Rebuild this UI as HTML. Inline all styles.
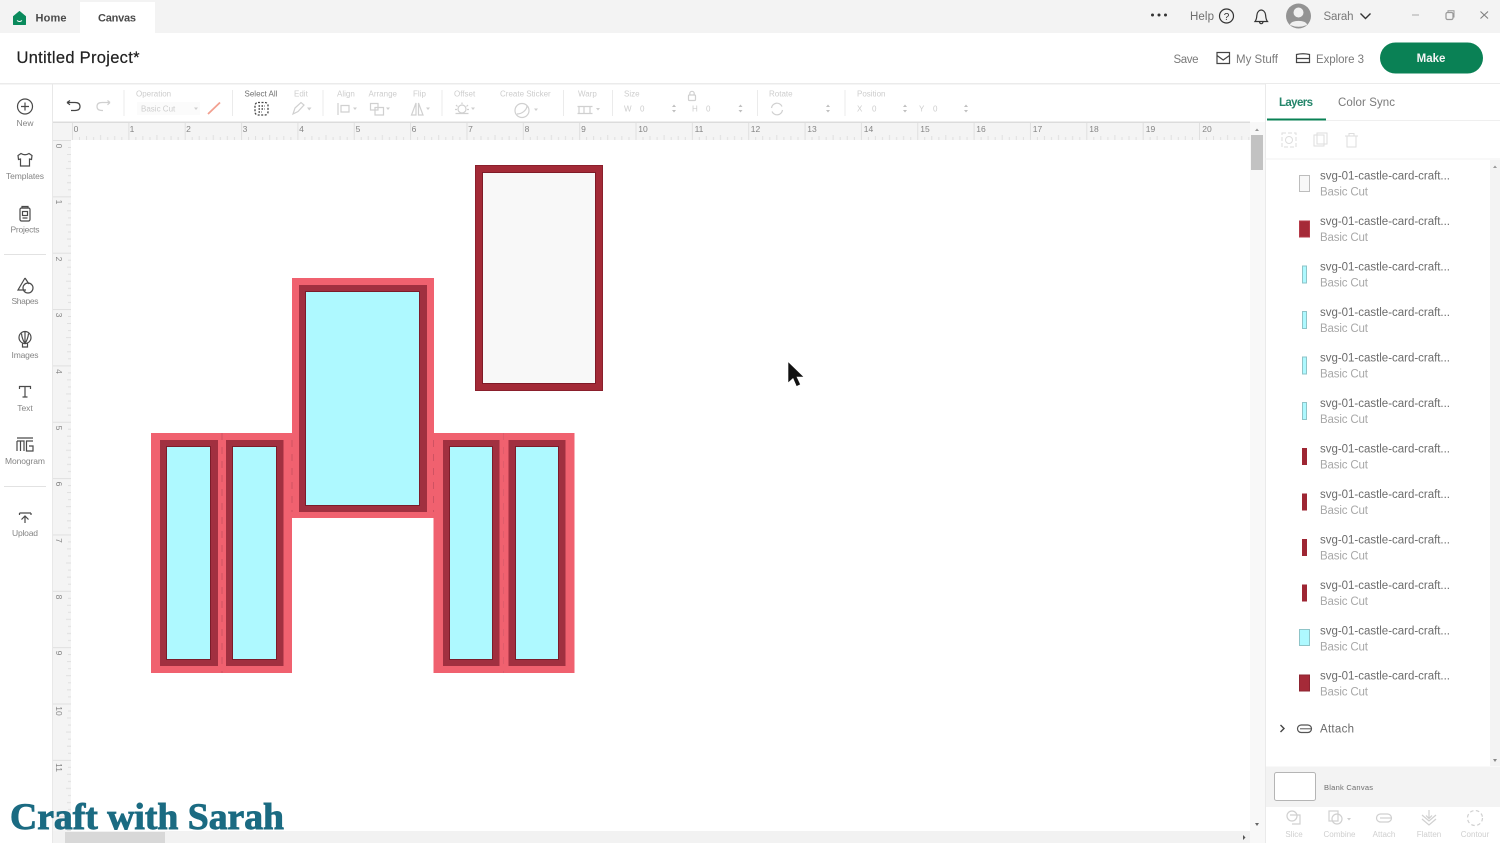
<!DOCTYPE html>
<html lang="en"><head><meta charset="utf-8"><title>Untitled Project</title>
<style>
html,body{margin:0;padding:0;background:#fff;width:1500px;height:843px;overflow:hidden}
svg{display:block;filter:blur(.35px)}
text{font-family:"Liberation Sans",sans-serif}
.n{font-size:8.5px;fill:#858585;text-anchor:middle}
.t{font-size:8px;fill:#cdcdcd}
.k{font-size:8px;fill:#cfcfcf;text-anchor:middle}
.r{font-size:8.5px;fill:#858585}
.l{font-size:11.5px;fill:#6c6c6c}
.b{font-size:11.5px;fill:#a8a8a8}
.i{fill:none;stroke:#4a4a4a;stroke-width:1.2}
.g{fill:none;stroke:#d0d0d0;stroke-width:1.2}
</style></head><body>
<svg width="1500" height="843" viewBox="0 0 1500 843" xmlns="http://www.w3.org/2000/svg">
<defs>
<pattern id="hr" x="72" y="122" width="56.35" height="18" patternUnits="userSpaceOnUse">
<rect width="56.35" height="18" fill="#f4f4f4"/>
<path d="M.5 0V18M7.5 15V18M14.5 14V18M21.6 15V18M28.6 13V18M35.7 15V18M42.7 14V18M49.8 15V18" stroke="#e0e0e0" stroke-width="1" fill="none"/>
</pattern>
<pattern id="vr" x="53" y="140" width="18" height="56.35" patternUnits="userSpaceOnUse">
<rect width="18" height="56.35" fill="#f4f4f4"/>
<path d="M0 .5H18M15 7.5H18M14 14.5H18M15 21.6H18M13 28.6H18M15 35.7H18M14 42.7H18M15 49.8H18" stroke="#e0e0e0" stroke-width="1" fill="none"/>
</pattern>
</defs>

<rect width="1500" height="843" fill="#fff"/>

<!-- top bar -->
<rect width="1500" height="33" fill="#f3f3f3"/>
<rect x="80" y="2" width="75" height="31" fill="#fff"/>
<path d="M13.500 16.500L19.500 11.500L25.500 16.500V24.500H13.500Z" fill="#0a8a5c" stroke="#0a8a5c" stroke-linejoin="round"/>
<path d="M17 20.500Q19.500 22.500 22 20.500" stroke="#fff" stroke-width="1" fill="none"/>
<text x="35.500" y="21.500" font-size="11" font-weight="700" fill="#4a4a4a" textLength="31">Home</text>
<text x="98" y="21.500" font-size="11" font-weight="700" fill="#4a4a4a" textLength="38">Canvas</text>
<circle cx="1152.500" cy="15" r="1.500" fill="#333"/><circle cx="1159" cy="15" r="1.500" fill="#333"/><circle cx="1165.500" cy="15" r="1.500" fill="#333"/>
<text x="1190" y="20" font-size="11.500" fill="#6e6e6e" textLength="24">Help</text>
<circle cx="1226.500" cy="16" r="7" fill="none" stroke="#333" stroke-width="1.200"/>
<text x="1226.500" y="20" font-size="10" fill="#333" text-anchor="middle">?</text>
<path d="M1255 21.500H1267.500C1265.500 19 1266 17 1265.500 14.500C1265 11.500 1263 10 1261.200 10C1259.500 10 1257.500 11.500 1257 14.500C1256.500 17 1257 19 1255 21.500ZM1259.500 21.800C1259.800 24.300 1262.700 24.300 1263 21.800" fill="none" stroke="#333" stroke-width="1.200"/>
<circle cx="1298.500" cy="16" r="12.500" fill="#939393"/>
<circle cx="1298.500" cy="12.500" r="5" fill="#f0f0f0"/>
<path d="M1290 25C1290 19.500 1307 19.500 1307 25Q1298.500 28.500 1290 25Z" fill="#f0f0f0"/>
<text x="1323.500" y="20" font-size="11.500" fill="#7a7a7a" textLength="30">Sarah</text>
<path d="M1360.500 13.500L1365.500 18.500L1370.500 13.500" fill="none" stroke="#333" stroke-width="1.400"/>
<path d="M1412 15H1419" stroke="#b5b5b5" stroke-width="1.200"/>
<rect x="1446" y="12.500" width="7" height="7" rx="1.500" fill="none" stroke="#999" stroke-width="1.200"/>
<path d="M1448 12V10.800H1454V17H1453" fill="none" stroke="#999"/>
<path d="M1480.500 11.500L1488 18.500M1488 11.500L1480.500 18.500" stroke="#808080" stroke-width="1.100"/>

<!-- title bar -->
<text x="16.500" y="63" font-size="16.500" fill="#222" stroke="#222" stroke-width=".2" textLength="123">Untitled Project*</text>
<text x="1173.500" y="63" font-size="11.500" fill="#7a7a7a" textLength="25">Save</text>
<path d="M1217 52.500H1229.500V63.500H1217ZM1217 55.500L1223.200 60L1229.500 55.500" fill="none" stroke="#444" stroke-width="1.200"/>
<text x="1236" y="63" font-size="11.500" fill="#7a7a7a" textLength="42">My Stuff</text>
<path d="M1296.500 54.500Q1303 53 1309.500 54.500V62.500H1296.500ZM1296.500 58.500H1309.500" fill="none" stroke="#444" stroke-width="1.200"/>
<text x="1316" y="63" font-size="11.500" fill="#7a7a7a" textLength="48">Explore 3</text>
<rect x="1380" y="42.500" width="103" height="31" rx="15.500" fill="#0a8155"/>
<text x="1431" y="62" font-size="11.500" font-weight="700" fill="#f4f4f4" text-anchor="middle">Make</text>
<rect y="83" width="1500" height="1.500" fill="#ebebeb"/>

<!-- toolbar -->
<g>
<path d="M67 102.500H75Q80 102.500 80 106.500T75 110.500H71M67 102.500L70 100.500M67 102.500L70 104.800" fill="none" stroke="#444" stroke-width="1.200"/>
<path d="M110 102.500H102Q97 102.500 97 106.500T102 110.500H103M110 102.500L107.500 100.500M110 102.500L107.500 104.800" fill="none" stroke="#d0d0d0" stroke-width="1.200"/>
<path d="M124 90V116M232.500 90V116M323 90V116M442 90V116M563.500 90V116M612.500 90V116M757.500 90V116M845 90V116" stroke="#ebebeb" stroke-width="1"/>
<text class="t" x="136" y="96.500">Operation</text>
<rect x="137" y="102" width="63" height="13" fill="#fbfbfb"/>
<text class="t" x="141" y="111.500">Basic Cut</text>
<path d="M194 107.500H198L196 110Z" fill="#cfcfcf"/>
<path d="M208 114L220 102.500" stroke="#f2a090" stroke-width="1.800"/>
<text x="244.500" y="96.500" font-size="8" fill="#707070">Select All</text>
<rect x="255" y="102.500" width="13" height="12.500" rx="3" fill="none" stroke="#444" stroke-width="1.300" stroke-dasharray="2 1.500"/>
<path d="M258.500 106H265M258.500 109H265M258.500 112H262" stroke="#444" stroke-width="1.500" stroke-dasharray="1.500 1.500"/>
<text class="t" x="294" y="96.500">Edit</text>
<path d="M293 114L295 108L301 102.500L304 105L298 111.500Z" class="g"/><path d="M307 107.500H311.500L309.200 110.500Z" fill="#cfcfcf"/>
<text class="t" x="337" y="96.500">Align</text>
<path d="M338 103V115M341 105.500H349V112H341Z" class="g"/><path d="M353 107.500H357L355 110Z" fill="#cfcfcf"/>
<text class="t" x="368.500" y="96.500">Arrange</text>
<path d="M370.500 103.500H378V110H370.500ZM375 107.500H383.500V115H375Z" class="g"/><path d="M386 107.500H390L388 110Z" fill="#cfcfcf"/>
<text class="t" x="413" y="96.500">Flip</text>
<path d="M416 103L411.500 115H416ZM418.500 103L423 115H418.500Z" class="g"/><path d="M426 107.500H430L428 110Z" fill="#cfcfcf"/>
<text class="t" x="454" y="96.500">Offset</text>
<circle cx="462" cy="109" r="4" class="g"/><path d="M462 102.500V104M456 105L457.500 106.500M468 105L466.500 106.500M455.500 113.500H468.500M455 109.500H457M467 109.500H469" class="g"/><path d="M471 107.500H475L473 110Z" fill="#cfcfcf"/>
<text class="t" x="500" y="96.500">Create Sticker</text>
<circle cx="522" cy="110.500" r="7" class="g"/><path d="M517 114C522 114 527 110 527 105.500" class="g"/><path d="M534 108.500H538L536 111Z" fill="#cfcfcf"/>
<text class="t" x="578" y="96.500">Warp</text>
<path d="M577.500 106.500H592.500M577.500 113.500H592.500M579 106.500V113.500M584 106.500V113.500M590 106.500V113.500" class="g"/><path d="M596 108H600L598 110.500Z" fill="#cfcfcf"/>
<text class="t" x="624" y="96.500">Size</text>
<rect x="688.500" y="95" width="7" height="5.500" class="g" rx="1"/><path d="M689.800 95V93.500A2.200 2.200 0 0 1 694.200 93.500V95" class="g"/>
<text class="t" x="624" y="111.500">W</text><text class="t" x="640" y="111.500">0</text>
<text class="t" x="692" y="111.500">H</text><text class="t" x="706" y="111.500">0</text>
<path d="M672 107L674 104.500L676 107ZM672 110L674 112.500L676 110Z" fill="#c0c0c0"/>
<path d="M738.500 107L740.500 104.500L742.500 107ZM738.500 110L740.500 112.500L742.500 110Z" fill="#c0c0c0"/>
<text class="t" x="769" y="96.500">Rotate</text>
<path d="M771.500 108A5.500 5.500 0 0 1 782 106.500M782.500 110A5.500 5.500 0 0 1 772 111.500" class="g"/>
<path d="M826 107L828 104.500L830 107ZM826 110L828 112.500L830 110Z" fill="#c0c0c0"/>
<text class="t" x="857" y="96.500">Position</text>
<text class="t" x="857" y="111.500">X</text><text class="t" x="872" y="111.500">0</text><text class="t" x="919" y="111.500">Y</text><text class="t" x="933" y="111.500">0</text>
<path d="M903 107L905 104.500L907 107ZM903 110L905 112.500L907 110Z" fill="#c0c0c0"/>
<path d="M964 107L966 104.500L968 107ZM964 110L966 112.500L968 110Z" fill="#c0c0c0"/>
</g>

<!-- rulers -->
<rect x="53" y="122" width="1197" height="18" fill="url(#hr)"/>
<rect x="53" y="140" width="18" height="691" fill="url(#vr)"/>
<rect x="53" y="122" width="19" height="18" fill="#f4f4f4"/>
<rect x="53" y="121.500" width="1197" height="1.500" fill="#dcdcdc"/>
<g>
<text class="n" x="76" y="132">0</text><text class="n" x="132" y="132">1</text><text class="n" x="188.500" y="132">2</text><text class="n" x="245" y="132">3</text><text class="n" x="301.500" y="132">4</text><text class="n" x="358" y="132">5</text><text class="n" x="414" y="132">6</text><text class="n" x="470.500" y="132">7</text><text class="n" x="527" y="132">8</text><text class="n" x="583.500" y="132">9</text><text class="n" x="643" y="132">10</text><text class="n" x="699" y="132">11</text><text class="n" x="755.500" y="132">12</text><text class="n" x="812" y="132">13</text><text class="n" x="868.500" y="132">14</text><text class="n" x="925" y="132">15</text><text class="n" x="981" y="132">16</text><text class="n" x="1037.500" y="132">17</text><text class="n" x="1094" y="132">18</text><text class="n" x="1150.500" y="132">19</text><text class="n" x="1207" y="132">20</text>
</g>
<g>
<text class="n" transform="translate(56 146) rotate(90)">0</text>
<text class="n" transform="translate(56 202) rotate(90)">1</text>
<text class="n" transform="translate(56 259) rotate(90)">2</text>
<text class="n" transform="translate(56 315) rotate(90)">3</text>
<text class="n" transform="translate(56 371.500) rotate(90)">4</text>
<text class="n" transform="translate(56 428) rotate(90)">5</text>
<text class="n" transform="translate(56 484) rotate(90)">6</text>
<text class="n" transform="translate(56 540.500) rotate(90)">7</text>
<text class="n" transform="translate(56 597) rotate(90)">8</text>
<text class="n" transform="translate(56 653) rotate(90)">9</text>
<text class="n" transform="translate(56 711) rotate(90)">10</text>
<text class="n" transform="translate(56 767.500) rotate(90)">11</text>
</g>

<!-- canvas shapes -->
<rect x="475.500" y="165.500" width="127" height="225" fill="#a32a37" stroke="#8a1f2c"/>
<rect x="482.500" y="172.500" width="113" height="211" fill="#f8f8f8" stroke="#7f1a27"/>

<rect x="292" y="278" width="142" height="240" fill="#f0616f"/>
<rect x="299" y="285" width="128" height="227" fill="#a13040"/>
<rect x="305.500" y="291.500" width="114" height="214" fill="#aef9ff" stroke="#7c1c2a"/>

<rect x="151" y="433" width="141" height="240" fill="#f0616f"/>
<rect x="160" y="440" width="58" height="226" fill="#a13040"/>
<rect x="166.500" y="446.500" width="44" height="213" fill="#aef9ff" stroke="#7c1c2a"/>
<rect x="226" y="440" width="57.500" height="226" fill="#a13040"/>
<rect x="232.500" y="446.500" width="44" height="213" fill="#aef9ff" stroke="#7c1c2a"/>

<rect x="433.500" y="433" width="141" height="240" fill="#f0616f"/>
<rect x="443" y="440" width="56.500" height="226" fill="#a13040"/>
<rect x="449.500" y="446.500" width="43" height="213" fill="#aef9ff" stroke="#7c1c2a"/>
<rect x="508.500" y="440" width="57" height="226" fill="#a13040"/>
<rect x="515.500" y="446.500" width="43" height="213" fill="#aef9ff" stroke="#7c1c2a"/>

<path d="M222 433V673M292 440V512M433.500 440V512" stroke="#cf5262" stroke-width="1" stroke-dasharray="7 7" fill="none"/>
<path d="M503.500 433V673" stroke="#e05c6b" stroke-width="1" stroke-dasharray="7 7" fill="none"/>

<!-- cursor -->
<path d="M788 361.500V383L793 378.500L796.500 386.500L800.500 384.500L797 377H804Z" fill="#111" stroke="#fff" stroke-width=".6"/>

<!-- left sidebar -->
<rect x="52" y="84" width="1" height="759" fill="#e8e8e8"/>
<g>
<circle cx="25" cy="106.500" r="7.500" class="i"/><path d="M25 102.500V110.500M21 106.500H29" class="i"/>
<text class="r" x="25" y="126" text-anchor="middle">New</text>
<path d="M21 153.500L18 155.500L18.500 159.500L20.500 159V166H29.500V159L31.500 159.500L32 155.500L29 153.500Q25 156 21 153.500Z" class="i"/>
<text class="r" x="25" y="179" text-anchor="middle" textLength="38">Templates</text>
<rect x="20" y="208" width="10" height="13" rx="1.500" class="i"/><rect x="22.500" y="211.500" width="5" height="4" class="i"/><path d="M22 206.500H28V208H22ZM22.500 218H27.500" class="i"/>
<text class="r" x="25" y="232.500" text-anchor="middle" textLength="29">Projects</text>
<rect x="4" y="254" width="42" height="1" fill="#e2e2e2"/>
<path d="M25 278L18 290H26M25 278L29 284" class="i"/><circle cx="28" cy="288" r="5" class="i"/>
<text class="r" x="25" y="304" text-anchor="middle" textLength="27">Shapes</text>
<circle cx="25" cy="337.500" r="6" class="i"/><path d="M22.500 343.500V347H27.500V343.500M25 332V343.500M21.500 333.500Q22 339 25 343.500Q28 339 28.500 333.500" class="i"/>
<text class="r" x="25" y="358" text-anchor="middle" textLength="27">Images</text>
<path d="M19.500 389V386.500H30.500V389M25 386.500V397M22.500 397H27.500" class="i"/>
<text class="r" x="25" y="411" text-anchor="middle">Text</text>
<path d="M17 438H33M17 441H24V451M20.500 441V451M17 441V451M33 441H26.500V451H33V446H29" class="i"/>
<text class="r" x="25" y="464" text-anchor="middle" textLength="40">Monogram</text>
<rect x="4" y="486" width="42" height="1" fill="#e2e2e2"/>
<path d="M19.500 513H31M19.500 513V515M31 513V515M25 523V516M21.500 519.500L25 516L28.500 519.500" class="i"/>
<text class="r" x="25" y="536" text-anchor="middle" textLength="26">Upload</text>
</g>

<!-- canvas scrollbars -->
<rect x="1250" y="122" width="15" height="721" fill="#f8f8f8"/>
<rect x="1251" y="135" width="12" height="35" fill="#c2c2c2"/>
<path d="M1255 131L1257 128.500L1259 131Z" fill="#999"/><path d="M1255 823L1257 826L1259 823Z" fill="#666"/>
<rect x="53" y="831" width="1197" height="12" fill="#f2f2f2"/>
<rect x="65" y="832" width="100" height="11" fill="#d8d8d8"/>
<path d="M1243 835L1245.500 837.500L1243 840Z" fill="#555"/>

<!-- right panel -->
<rect x="1265" y="84" width="235" height="759" fill="#fff"/>
<rect x="1265" y="84" width="1" height="759" fill="#eaeaea"/>
<text x="1279" y="106" font-size="11.500" font-weight="700" fill="#23856a" textLength="34">Layers</text>
<text x="1338" y="106" font-size="11.500" fill="#7a7a7a" textLength="57">Color Sync</text>
<rect x="1267" y="118.500" width="59" height="2" fill="#0a8155"/>
<rect x="1326" y="120" width="174" height="1" fill="#efefef"/>
<rect x="1282" y="133" width="14" height="14" fill="none" stroke="#dedede" stroke-dasharray="4 2"/><circle cx="1289" cy="140" r="3.500" fill="none" stroke="#dedede"/>
<rect x="1314" y="135" width="10" height="11" fill="none" stroke="#dedede"/><rect x="1317" y="133" width="10" height="11" fill="none" stroke="#dedede"/>
<path d="M1345 136H1358M1347 136V147H1356V136M1349 136V133.500H1354V136" fill="none" stroke="#dedede"/>
<rect x="1265" y="158.500" width="235" height="1" fill="#f0f0f0"/>
<rect x="1490" y="160" width="10" height="606" fill="#f3f3f3"/>
<path d="M1493 168L1495 165.500L1497 168Z" fill="#999"/><path d="M1493 759L1495 762L1497 759Z" fill="#888"/>

<g>
<text class="l" x="1320" y="179.500" textLength="130">svg-01-castle-card-craft...</text><text class="b" x="1320" y="195.500" textLength="48">Basic Cut</text>
<text class="l" x="1320" y="225" textLength="130">svg-01-castle-card-craft...</text><text class="b" x="1320" y="241" textLength="48">Basic Cut</text>
<text class="l" x="1320" y="270.500" textLength="130">svg-01-castle-card-craft...</text><text class="b" x="1320" y="286.500" textLength="48">Basic Cut</text>
<text class="l" x="1320" y="316" textLength="130">svg-01-castle-card-craft...</text><text class="b" x="1320" y="332" textLength="48">Basic Cut</text>
<text class="l" x="1320" y="361.500" textLength="130">svg-01-castle-card-craft...</text><text class="b" x="1320" y="377.500" textLength="48">Basic Cut</text>
<text class="l" x="1320" y="407" textLength="130">svg-01-castle-card-craft...</text><text class="b" x="1320" y="423" textLength="48">Basic Cut</text>
<text class="l" x="1320" y="452.500" textLength="130">svg-01-castle-card-craft...</text><text class="b" x="1320" y="468.500" textLength="48">Basic Cut</text>
<text class="l" x="1320" y="498" textLength="130">svg-01-castle-card-craft...</text><text class="b" x="1320" y="514" textLength="48">Basic Cut</text>
<text class="l" x="1320" y="543.500" textLength="130">svg-01-castle-card-craft...</text><text class="b" x="1320" y="559.500" textLength="48">Basic Cut</text>
<text class="l" x="1320" y="589" textLength="130">svg-01-castle-card-craft...</text><text class="b" x="1320" y="605" textLength="48">Basic Cut</text>
<text class="l" x="1320" y="634.500" textLength="130">svg-01-castle-card-craft...</text><text class="b" x="1320" y="650.500" textLength="48">Basic Cut</text>
<text class="l" x="1320" y="679.500" textLength="130">svg-01-castle-card-craft...</text><text class="b" x="1320" y="695.500" textLength="48">Basic Cut</text>
</g>
<g>
<rect x="1299.500" y="175.500" width="10" height="16" fill="#f8f8f8" stroke="#bdbdbd"/>
<rect x="1299.500" y="221" width="10" height="16" fill="#a52a38" stroke="#b53a48"/>
<rect x="1302.500" y="266" width="4" height="17" fill="#aef9ff" stroke="#8fc4c8"/>
<rect x="1302.500" y="311.500" width="4" height="17" fill="#aef9ff" stroke="#8fc4c8"/>
<rect x="1302.500" y="357" width="4" height="17" fill="#aef9ff" stroke="#8fc4c8"/>
<rect x="1302.500" y="402.500" width="4" height="17" fill="#aef9ff" stroke="#8fc4c8"/>
<rect x="1302" y="448" width="5" height="17" fill="#9e2633"/>
<rect x="1302" y="493.500" width="5" height="17" fill="#9e2633"/>
<rect x="1302" y="539" width="5" height="17" fill="#9e2633"/>
<rect x="1302" y="584.500" width="5" height="17" fill="#9e2633"/>
<rect x="1299.500" y="629.500" width="10" height="16" fill="#aef9ff" stroke="#8fc4c8"/>
<rect x="1299.500" y="675" width="10" height="16" fill="#a52a38" stroke="#8d2431"/>
</g>
<path d="M1280.500 725L1284 728.500L1280.500 732" fill="none" stroke="#444" stroke-width="1.400"/>
<rect x="1297.500" y="725" width="14" height="7.500" rx="3.700" fill="none" stroke="#555" stroke-width="1.200"/><path d="M1300 728.800H1311" stroke="#555"/>
<text class="l" x="1320" y="732.500" textLength="34">Attach</text>

<!-- blank canvas -->
<rect x="1266" y="766.500" width="234" height="40.500" fill="#f3f3f3"/>
<rect x="1274.500" y="772.500" width="41" height="28" rx="2" fill="#fff" stroke="#b5b5b5"/>
<text x="1324" y="790" font-size="7.500" fill="#6e6e6e" textLength="49">Blank Canvas</text>
<g>
<circle cx="1292" cy="816" r="5" class="g"/><path d="M1290 815H1300V824H1292" class="g"/>
<text class="k" x="1294" y="837">Slice</text>
<rect x="1329" y="811" width="9" height="10" class="g"/><circle cx="1337" cy="819" r="5" class="g"/><path d="M1347 818H1351L1349 820.500Z" fill="#cfcfcf"/>
<text class="k" x="1339.500" y="837">Combine</text>
<rect x="1376.500" y="814" width="15" height="8" rx="4" class="g"/><path d="M1380 818H1391" class="g"/>
<text class="k" x="1384" y="837">Attach</text>
<path d="M1429 810V818M1426 815.500L1429 818.500L1432 815.500M1422 815L1429 821L1436 815M1422 819L1429 825L1436 819" class="g"/>
<text class="k" x="1429" y="837">Flatten</text>
<circle cx="1475" cy="818" r="7.500" class="g" stroke-dasharray="3.500 2.500"/>
<text class="k" x="1475" y="837">Contour</text>
</g>

<!-- watermark -->
<text x="10" y="829" font-size="37" font-weight="700" fill="#1b6b82" stroke="#1b6b82" stroke-width=".9" style="font-family:'Liberation Serif',serif" textLength="274" lengthAdjust="spacingAndGlyphs">Craft with Sarah</text>
</svg>
</body></html>
